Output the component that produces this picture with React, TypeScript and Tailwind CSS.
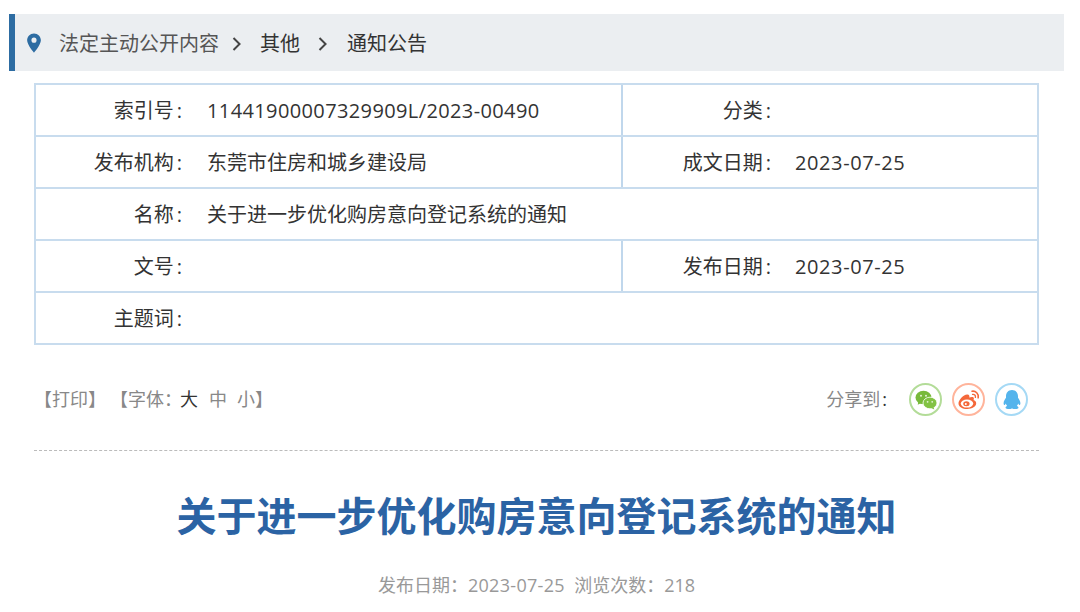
import React from "react";

function Label({ text, width, gap }: { text: string; width: string; gap: string }) {
  return (
    <div className={`${width} shrink-0 text-right`}>
      {text}
      <span className={gap}>:</span>
    </div>
  );
}

function Row({
  label,
  value,
  valueClass,
  rightLabel,
  rightValue,
  hasRight,
}: {
  label: string;
  value?: string;
  valueClass?: string;
  rightLabel?: string;
  rightValue?: string;
  hasRight?: boolean;
}) {
  return (
    <div className="flex h-[52px] items-center border-b-2 border-[#c8dcee] last:h-[50px] last:border-b-0">
      <div
        className={`flex h-full items-center pt-[1px] ${hasRight ? "w-[587px] border-r-2 border-[#c0d7ec]" : "flex-1"}`}
      >
        <Label text={label} width="w-[146px]" gap="ml-[3px]" />
        <div className={`ml-[25px] ${valueClass ?? ""}`}>{value}</div>
      </div>
      {hasRight && (
        <div className="flex h-full flex-1 items-center pt-[1px]">
          <Label text={rightLabel ?? ""} width="w-[148px]" gap="ml-[3px]" />
          <div className="ml-[24px] tracking-[0.6px]">{rightValue}</div>
        </div>
      )}
    </div>
  );
}

function WeChatIcon() {
  return (
    <svg viewBox="0 0 24 24" className="h-[24px] w-[24px]">
      <ellipse cx="9.500" cy="9.500" rx="8" ry="6.800" fill="#78b93a" />
      <path d="M4.500 13.500l-.8 3.200 3.600-1.800z" fill="#78b93a" />
      <circle cx="7" cy="7.800" r="1" fill="#e4f2d6" />
      <circle cx="12" cy="7.800" r="1" fill="#e4f2d6" />
      <ellipse cx="16" cy="15" rx="7" ry="5.800" fill="#82c243" stroke="#fff" strokeWidth="0.800" />
      <path d="M19.500 19l.8 2.600-3.200-1.600z" fill="#82c243" />
      <circle cx="13.600" cy="13.800" r="0.900" fill="#e4f2d6" />
      <circle cx="18.200" cy="13.800" r="0.900" fill="#e4f2d6" />
    </svg>
  );
}

function WeiboIcon() {
  return (
    <svg viewBox="0 0 24 24" className="h-[24px] w-[24px]">
      <path
        d="M10.200 21c-4.600 0-8.700-2.200-8.700-5.600 0-3.300 4.800-8.600 8.600-8.900 2.100-.2 2.600 1.400 2.200 3 1.800-.6 4.500-1 4.600 1 0 .7-.2 1.200-.5 1.600 1.700.5 2.800 1.600 2.800 3.200 0 3.100-4 5.700-9 5.700z"
        fill="#f4683a"
      />
      <ellipse cx="10" cy="15.600" rx="6.200" ry="4" fill="#fff" />
      <ellipse cx="9.400" cy="15.800" rx="3.200" ry="2.500" fill="#f4683a" />
      <circle cx="8.800" cy="16" r="1" fill="#fff" />
      <path d="M15 3.200c3.600-.6 7 2.400 6.200 6.600" fill="none" stroke="#f4683a" strokeWidth="1.600" strokeLinecap="round" />
      <path d="M15.600 6.400c1.800-.3 3.200 1.100 2.800 3" fill="none" stroke="#f4683a" strokeWidth="1.400" strokeLinecap="round" />
    </svg>
  );
}

function QQIcon() {
  return (
    <svg viewBox="0 0 24 24" className="h-[24px] w-[24px]">
      <path
        d="M12 2c3.900 0 6 2.900 6 6.400v1.400c1.200 1.600 2.400 3.700 2.400 5.500 0 1.300-.5 1.900-1 1.700-.4-.1-.8-.7-1.200-1.400-.2 1-.7 1.800-1.400 2.500 1 .4 1.700 1 1.700 1.600 0 .9-1.800 1.400-3.600 1.400-1 0-2-.2-2.600-.6-.2 0-.4 0-.6 0-.6.4-1.600.6-2.600.6-1.800 0-3.600-.5-3.600-1.400 0-.6.7-1.200 1.700-1.600-.7-.7-1.200-1.500-1.400-2.500-.4.7-.8 1.300-1.200 1.400-.5.2-1-.4-1-1.700 0-1.800 1.200-3.900 2.400-5.500V8.400C6 4.900 8.100 2 12 2z"
        fill="#54b4ec"
      />
    </svg>
  );
}

function ShareIcon({ ring, children }: { ring: string; children: React.ReactNode }) {
  return (
    <div className={`flex h-[33px] w-[33px] items-center justify-center rounded-full border-2 ${ring}`}>{children}</div>
  );
}

function Chevron({ className }: { className: string }) {
  return (
    <svg viewBox="0 0 12 12" className={className}>
      <path d="M3 .8L8.200 6 3 11.200" fill="none" stroke="#444" strokeWidth="1.700" />
    </svg>
  );
}

export default function App() {
  return (
    <div className="h-[612px] w-[1080px] overflow-hidden bg-white pt-[14px] font-['Open_Sans','Noto_Sans_CJK_SC',sans-serif] text-[20px] text-[#333]">
      <div className="ml-[9px] flex h-[57px] w-[1055px] items-center border-l-[6px] border-[#2d6ca2] bg-[#ebeef1] pt-[3px]">
        <svg viewBox="0 0 24 24" className="-mt-[3px] ml-[8px] h-[22px] w-[22px]">
          <path
            d="M12 1.500c-4.300 0-7.500 3.200-7.500 7.500 0 5 7.500 13.500 7.500 13.500s7.500-8.500 7.500-13.500c0-4.300-3.200-7.500-7.500-7.500zm0 10.200a2.800 2.800 0 1 1 0-5.600 2.800 2.800 0 0 1 0 5.600z"
            fill="#2d6ca2"
          />
        </svg>
        <span className="ml-[14px] text-[#555]">法定主动公开内容</span>
        <Chevron className="ml-[11px] h-[14px] w-[14px]" />
        <span className="ml-[16px]">其他</span>
        <Chevron className="ml-[16px] h-[14px] w-[14px]" />
        <span className="ml-[17px]">通知公告</span>
      </div>

      <div className="ml-[34px] mt-[12px] w-[1005px] border-2 border-[#c8dcee]">
        <Row
          label="索引号"
          value="11441900007329909L/2023-00490"
          valueClass="tracking-[0.38px]"
          hasRight
          rightLabel="分类"
        />
        <Row label="发布机构" value="东莞市住房和城乡建设局" hasRight rightLabel="成文日期" rightValue="2023-07-25" />
        <Row label="名称" value="关于进一步优化购房意向登记系统的通知" />
        <Row label="文号" hasRight rightLabel="发布日期" rightValue="2023-07-25" />
        <Row label="主题词" />
      </div>

      <div className="ml-[34px] mt-[37px] flex h-[35px] w-[1005px] items-center text-[18px] text-[#888]">
        <span>【打印】</span>
        <span className="ml-[4px]">【字体：</span>
        <span className="-ml-[2px] text-[#333]">大</span>
        <span className="ml-[11px]">中</span>
        <span className="ml-[10px]">小】</span>
        <span className="ml-auto">
          分享到<span className="ml-[2px] text-[#333]">:</span>
        </span>
        <div className="ml-[22px] mr-[11px] flex gap-[10px]">
          <ShareIcon ring="border-[#b3dc98]">
            <WeChatIcon />
          </ShareIcon>
          <ShareIcon ring="border-[#ffb49b]">
            <WeiboIcon />
          </ShareIcon>
          <ShareIcon ring="border-[#a5d9f5]">
            <QQIcon />
          </ShareIcon>
        </div>
      </div>

      <div className="ml-[34px] mt-[33px] w-[1005px] border-t border-dashed border-[#bbb]" />

      <h1 className="ml-[34px] mt-[37px] w-[1005px] text-center text-[40px] font-bold leading-[56px] text-[#2b63a4]">
        关于进一步优化购房意向登记系统的通知
      </h1>

      <div className="ml-[34px] mt-[28px] w-[1005px] text-center text-[18px] text-[#999]">
        发布日期：<span className="tracking-[0.3px]">2023-07-25</span>&nbsp;&nbsp;浏览次数：218
      </div>
    </div>
  );
}
